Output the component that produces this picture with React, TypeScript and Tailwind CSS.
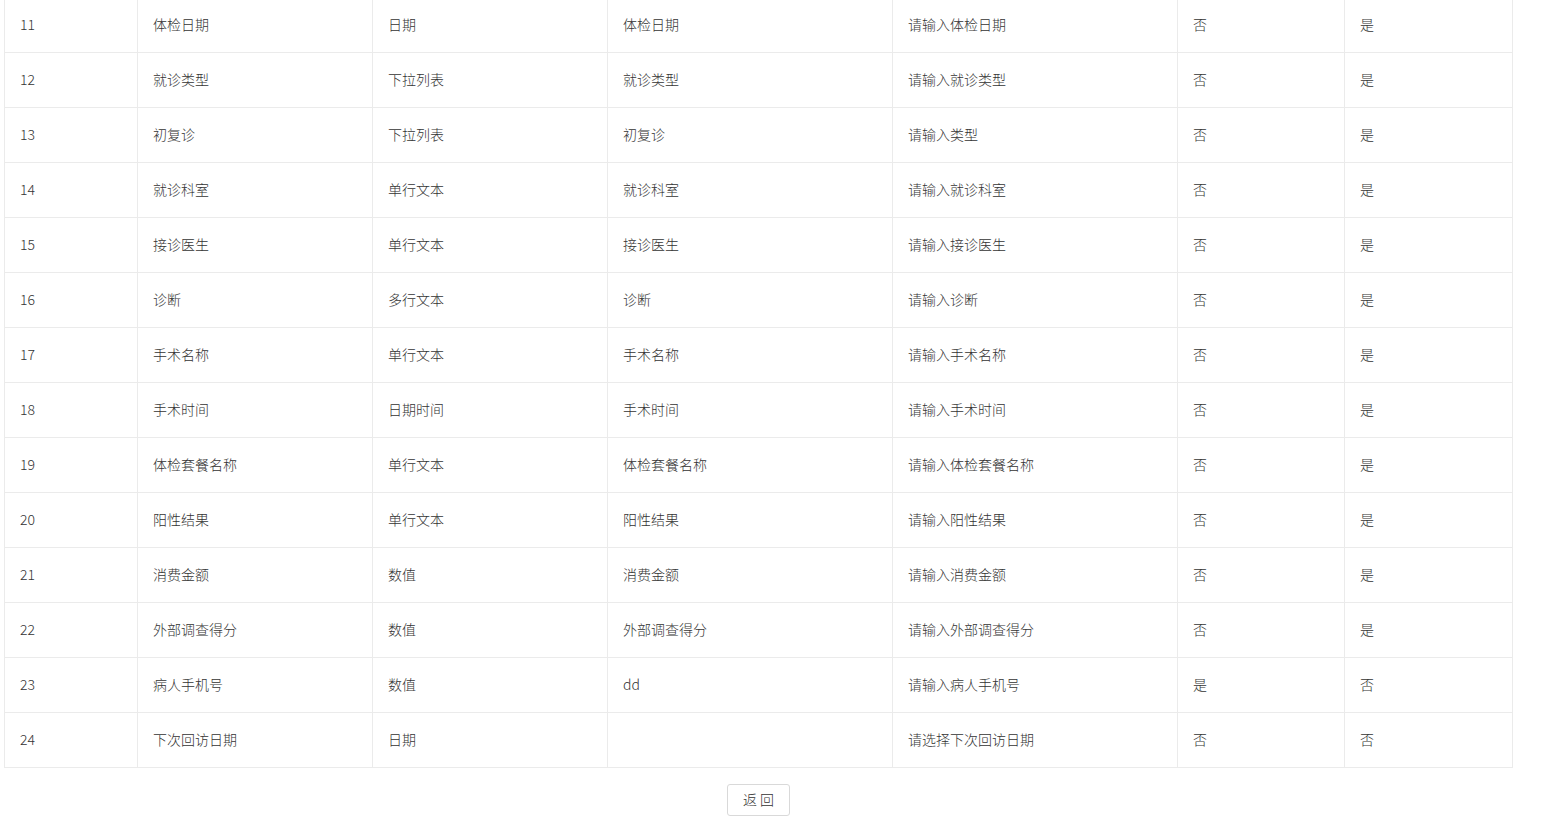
import React from "react"

type Row = {
  no: number
  name: string
  type: string
  label: string
  placeholder: string
  required: string
  visible: string
}

const rows: Row[] = [
  { no: 11, name: "体检日期", type: "日期", label: "体检日期", placeholder: "请输入体检日期", required: "否", visible: "是" },
  { no: 12, name: "就诊类型", type: "下拉列表", label: "就诊类型", placeholder: "请输入就诊类型", required: "否", visible: "是" },
  { no: 13, name: "初复诊", type: "下拉列表", label: "初复诊", placeholder: "请输入类型", required: "否", visible: "是" },
  { no: 14, name: "就诊科室", type: "单行文本", label: "就诊科室", placeholder: "请输入就诊科室", required: "否", visible: "是" },
  { no: 15, name: "接诊医生", type: "单行文本", label: "接诊医生", placeholder: "请输入接诊医生", required: "否", visible: "是" },
  { no: 16, name: "诊断", type: "多行文本", label: "诊断", placeholder: "请输入诊断", required: "否", visible: "是" },
  { no: 17, name: "手术名称", type: "单行文本", label: "手术名称", placeholder: "请输入手术名称", required: "否", visible: "是" },
  { no: 18, name: "手术时间", type: "日期时间", label: "手术时间", placeholder: "请输入手术时间", required: "否", visible: "是" },
  { no: 19, name: "体检套餐名称", type: "单行文本", label: "体检套餐名称", placeholder: "请输入体检套餐名称", required: "否", visible: "是" },
  { no: 20, name: "阳性结果", type: "单行文本", label: "阳性结果", placeholder: "请输入阳性结果", required: "否", visible: "是" },
  { no: 21, name: "消费金额", type: "数值", label: "消费金额", placeholder: "请输入消费金额", required: "否", visible: "是" },
  { no: 22, name: "外部调查得分", type: "数值", label: "外部调查得分", placeholder: "请输入外部调查得分", required: "否", visible: "是" },
  { no: 23, name: "病人手机号", type: "数值", label: "dd", placeholder: "请输入病人手机号", required: "是", visible: "否" },
  { no: 24, name: "下次回访日期", type: "日期", label: "", placeholder: "请选择下次回访日期", required: "否", visible: "否" },
]

// cell = content + right/bottom border
function Cell({ children }: { children?: React.ReactNode }) {
  return (
    <div className="flex h-[55px] items-center border-r border-b border-[#ebebeb] pl-[15px] pr-2 pb-[2px] whitespace-nowrap overflow-hidden">
      {children}
    </div>
  )
}

export default function App() {
  return (
    <div
      className="min-h-screen bg-white text-[14px] font-light text-[#333]"
      style={{ fontFamily: '"Noto Sans CJK SC", "Noto Sans", sans-serif' }}
    >
      <div className="ml-[4px] mt-[-3px] w-[1509px]">
        <div className="grid grid-cols-[133px_235px_235px_285px_285px_167px_168px] border-l border-t border-[#ebebeb]">
          {rows.map((r) => (
            <React.Fragment key={r.no}>
              <Cell>{r.no}</Cell>
              <Cell>{r.name}</Cell>
              <Cell>{r.type}</Cell>
              <Cell>{r.label}</Cell>
              <Cell>{r.placeholder}</Cell>
              <Cell>{r.required}</Cell>
              <Cell>{r.visible}</Cell>
            </React.Fragment>
          ))}
        </div>

        <div className="flex justify-center pt-[16px]">
          <button className="h-[32px] w-[63px] rounded-[3px] border border-[#d9d9d9] bg-white pb-[2px] text-[14px] text-[#333]">
            返 回
          </button>
        </div>
      </div>
    </div>
  )
}
